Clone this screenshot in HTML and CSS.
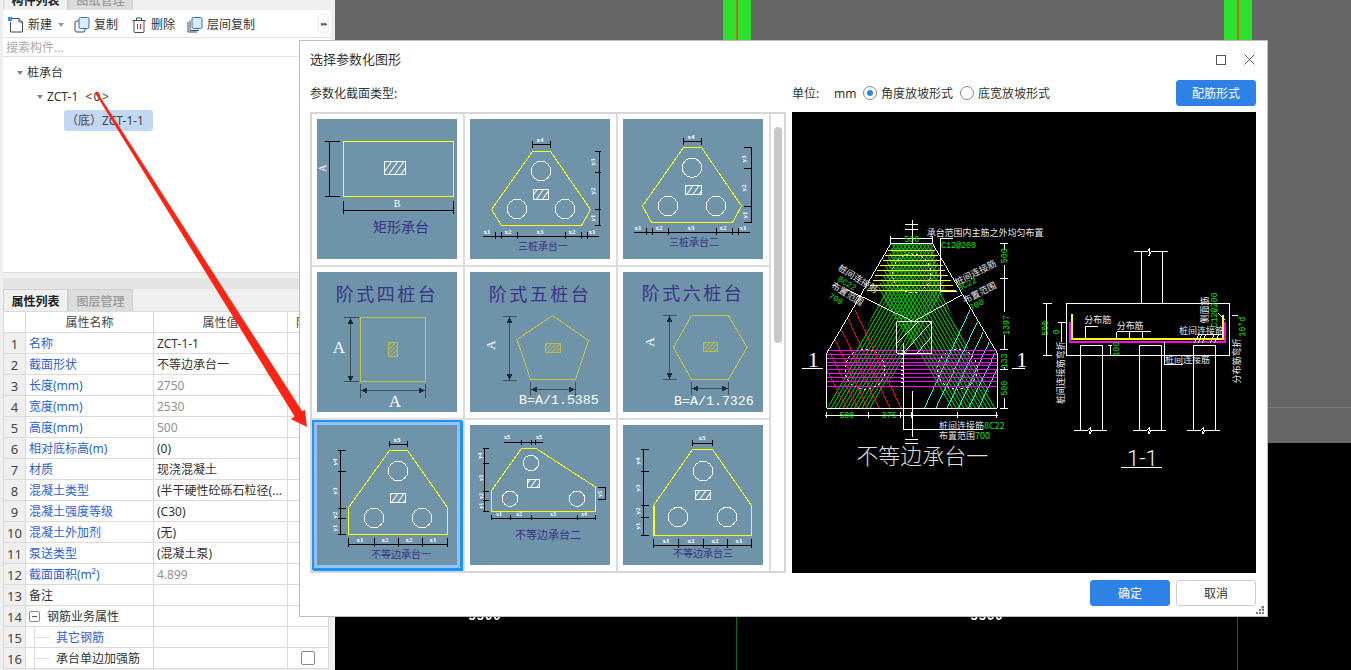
FILE: index.html
```html
<!DOCTYPE html>
<html lang="zh-CN">
<head>
<meta charset="utf-8">
<title>选择参数化图形</title>
<link rel="stylesheet" href="styles.css">
</head>
<body>
<svg class="defs" aria-hidden="true">
  <defs>
    <pattern id="hw" patternUnits="userSpaceOnUse" width="5" height="5" patternTransform="rotate(35)"><rect width="5" height="5" fill="#6f93a9"/><rect x="0" width="1" height="5" fill="#fff"/></pattern>
    <pattern id="hy" patternUnits="userSpaceOnUse" width="3" height="3" patternTransform="rotate(45)"><rect width="3" height="3" fill="#6f93a9"/><rect width="1" height="3" fill="#b9bb4c"/></pattern>
    <pattern id="gl" patternUnits="userSpaceOnUse" width="10" height="10" patternTransform="rotate(30)"><rect x="0" width="3" height="10" fill="#00d800"/></pattern>
    <pattern id="gr" patternUnits="userSpaceOnUse" width="10" height="10" patternTransform="rotate(-30)"><rect x="0" width="3" height="10" fill="#00d800"/></pattern>
  </defs>
</svg>

<div class="app">
  <aside class="panel">
    <div class="tabs tabs-top">
      <div class="tab tab-on">构件列表</div>
      <div class="tab">图纸管理</div>
    </div>
    <div class="toolbar">
      <svg class="ico" viewBox="0 0 16 16"><path class="i-line" d="M3 1.500h8l3.500 3.500v10H2.500V5"/><path class="i-line" d="M11 1.500V5h3.500"/><rect x="0" y="0" width="4" height="4" fill="#3b8fe8"/></svg>
      <span class="tool-label">新建</span>
      <span class="caret-small"></span>
      <svg class="ico ico-copy" viewBox="0 0 16 16"><rect class="i-line" x="1" y="4" width="10" height="11" rx="2"/><rect class="i-fill" x="5" y="0.500" width="10" height="11" rx="1.500"/></svg>
      <span class="tool-label">复制</span>
      <svg class="ico ico-del" viewBox="0 0 16 16"><path class="i-line" d="M3 4v10.500a1 1 0 0 0 1 1h8a1 1 0 0 0 1-1V4M1.500 3.500h13M5.500 3.500V1h5v2.500"/><path d="M6.500 7v5M9.500 7v5" stroke="#d8232a" fill="none"/></svg>
      <span class="tool-label">删除</span>
      <svg class="ico ico-layer" viewBox="0 0 16 16"><path class="i-line" d="M1 5v10h9M3 3.500v10h9"/><rect class="i-fill" x="5" y="0.500" width="10" height="11" rx="1.500"/></svg>
      <span class="tool-label">层间复制</span>
      <span class="more">&#9656;&#9656;</span>
    </div>
    <div class="search">搜索构件...</div>
    <div class="tree">
      <div class="node node-1"><span class="caret"></span>桩承台</div>
      <div class="node node-2"><span class="caret"></span>ZCT-1<span class="cnt">&lt;0&gt;</span></div>
      <div class="node node-3"><span class="pill">（底）ZCT-1-1</span></div>
    </div>
    <div class="band"></div>
    <div class="tabs">
      <div class="tab tab-on">属性列表</div>
      <div class="tab">图层管理</div>
    </div>
    <table class="props">
      <colgroup><col class="c-n"><col class="c-a"><col class="c-b"><col class="c-c"></colgroup>
      <thead><tr><th></th><th>属性名称</th><th>属性值</th><th>附加</th></tr></thead>
      <tbody>
        <tr><td class="num">1</td><td class="key">名称</td><td class="val">ZCT-1-1</td><td></td></tr>
        <tr><td class="num">2</td><td class="key">截面形状</td><td class="val">不等边承台一</td><td></td></tr>
        <tr><td class="num">3</td><td class="key">长度(mm)</td><td class="val mute">2750</td><td></td></tr>
        <tr><td class="num">4</td><td class="key">宽度(mm)</td><td class="val mute">2530</td><td></td></tr>
        <tr><td class="num">5</td><td class="key">高度(mm)</td><td class="val mute">500</td><td></td></tr>
        <tr><td class="num">6</td><td class="key">相对底标高(m)</td><td class="val">(0)</td><td></td></tr>
        <tr><td class="num">7</td><td class="key">材质</td><td class="val">现浇混凝土</td><td></td></tr>
        <tr><td class="num">8</td><td class="key">混凝土类型</td><td class="val">(半干硬性砼砾石粒径(...</td><td></td></tr>
        <tr><td class="num">9</td><td class="key">混凝土强度等级</td><td class="val">(C30)</td><td></td></tr>
        <tr><td class="num">10</td><td class="key">混凝土外加剂</td><td class="val">(无)</td><td></td></tr>
        <tr><td class="num">11</td><td class="key">泵送类型</td><td class="val">(混凝土泵)</td><td></td></tr>
        <tr><td class="num">12</td><td class="key">截面面积(m²)</td><td class="val mute">4.899</td><td></td></tr>
        <tr><td class="num">13</td><td class="key plain">备注</td><td></td><td></td></tr>
        <tr><td class="num">14</td><td class="key plain"><span class="minus"></span>钢筋业务属性</td><td></td><td></td></tr>
        <tr><td class="num">15</td><td class="key key-tree"><span class="branch"></span>其它钢筋</td><td></td><td></td></tr>
        <tr><td class="num">16</td><td class="key key-tree plain"><span class="branch"></span>承台单边加强筋</td><td></td><td class="chk"><span class="box"></span></td></tr>
      </tbody>
    </table>
  </aside>

  <main class="canvas">
    <div class="cv-grey"></div>
    <div class="cv-black"></div>
    <div class="col col-a"></div>
    <div class="col col-b"></div>
    <div class="hline"></div>
    <div class="gline gline-a"></div>
    <div class="gline gline-b"></div>
    <div class="axis axis-a">5500</div>
    <div class="axis axis-b">5500</div>
  </main>
</div>

<section class="dialog">
  <header class="dlg-title">
    <span>选择参数化图形</span>
    <span class="win">
      <span class="win-max"></span>
      <svg class="win-x" viewBox="0 0 11 11"><path d="M.5.500l10 10M10.500.500l-10 10"/></svg>
    </span>
  </header>
  <div class="dlg-opts">
    <div class="opt-left">参数化截面类型:</div>
    <div class="opt-right">
      <span class="unit">单位:</span>
      <span class="mm">mm</span>
      <span class="radio radio-on"></span><span class="radio-t">角度放坡形式</span>
      <span class="radio"></span><span class="radio-t">底宽放坡形式</span>
      <button class="btn btn-blue btn-push">配筋形式</button>
    </div>
  </div>
  <div class="dlg-body">
    <div class="gallery">
      <div class="grid">

        <div class="cell"><svg class="thumb" viewBox="0 0 140 140">
          <rect class="yl" x="26.500" y="22.500" width="110" height="55"/>
          <rect class="hatch" x="67.500" y="42.500" width="21" height="13"/>
          <path class="bk" d="M12.500 22.500v55M8 22.500h15M8 77.500h15M26.500 91.500h110M26.500 82v13M136.500 82v13"/>
          <text class="lb rot" x="9" y="49" transform="rotate(-90 9 49)">A</text>
          <text class="lb" x="80" y="88">B</text>
          <text class="cap cap-14" x="84" y="113">矩形承台</text>
        </svg></div>

        <div class="cell"><svg class="thumb" viewBox="0 0 140 140">
          <path class="yt" d="M62.500 32.500h18l40 58-9 16h-80l-10-16z"/>
          <circle class="wh" cx="71" cy="52" r="9.700"/><circle class="wh" cx="47" cy="90" r="9.700"/><circle class="wh" cx="95" cy="90" r="9.700"/>
          <rect class="hatch" x="63.500" y="70.500" width="15" height="10"/>
          <path class="bk" d="M62.500 25.500h18M62.500 22v7M80.500 22v7M129.500 32.500v74M125 32.500h6M125 53h6M125 90.500h6M125 106.500h6M13 117.500h116M25.500 113v7M31.500 113v7M47.500 113v7M95.500 113v7M111.500 113v7M117.500 113v7"/>
          <text class="sm" x="70" y="23">x4</text>
          <text class="sm" x="123" y="45" transform="rotate(-90 123 43)">y3</text><text class="sm" x="123" y="74" transform="rotate(-90 123 72)">y2</text><text class="sm" x="123" y="101" transform="rotate(-90 123 99)">y1</text>
          <text class="sm" x="17" y="115">x1</text><text class="sm" x="38" y="115">x2</text><text class="sm" x="70" y="115">x3</text><text class="sm" x="102" y="115">x2</text><text class="sm" x="122" y="115">x1</text>
          <text class="cap cap-10" x="73" y="131">三桩承台一</text>
        </svg></div>

        <div class="cell"><svg class="thumb" viewBox="0 0 140 140">
          <path class="yt" d="M60.500 28.500h18l40 58.500-9 16.500h-81l-9-16.500z"/>
          <circle class="wh" cx="69" cy="48.700" r="9.700"/><circle class="wh" cx="45" cy="87" r="9.700"/><circle class="wh" cx="93" cy="87" r="9.700"/>
          <rect class="hatch" x="62.500" y="66.500" width="16" height="9"/>
          <path class="bk" d="M60.500 22.500h18M60.500 19v7M78.500 19v7M128.500 28.500v75M121 28.500h8M121 49.500h8M121 87h8M121 103.500h8M11 113.500h116M23.500 109v7M29.500 109v7M45.500 109v7M93.500 109v7M109.500 109v7M115.500 109v7"/>
          <text class="sm" x="68" y="20">x4</text>
          <text class="sm" x="121" y="42" transform="rotate(-90 121 40)">y3</text><text class="sm" x="121" y="71" transform="rotate(-90 121 69)">y2</text><text class="sm" x="122" y="98" transform="rotate(-90 122 96)">y1</text>
          <text class="sm" x="15" y="111">x1</text><text class="sm" x="36" y="111">x2</text><text class="sm" x="68" y="111">x3</text><text class="sm" x="100" y="111">x2</text><text class="sm" x="120" y="111">x1</text>
          <text class="cap cap-10" x="71" y="126.500">三桩承台二</text>
        </svg></div>

        <div class="cell"><svg class="thumb" viewBox="0 0 140 140">
          <text class="cap cap-20" x="70" y="29">阶式四桩台</text>
          <rect class="ys" x="43.500" y="45.500" width="65" height="64"/>
          <rect class="hy" x="71.500" y="70.500" width="9" height="14"/>
          <path class="dk" d="M33.500 46v64M26.500 45.500h15M26.500 109.500h15M44 118.500h64M43.500 112v14M108.500 112v14"/>
          <path class="ar" d="M33.500 46l-3 6h6zM33.500 110l-3-6h6zM44 118.500l6-3v6zM108 118.500l-6-3v6z"/>
          <text class="lbb" x="22" y="81">A</text>
          <text class="lbb" x="78" y="135">A</text>
        </svg></div>

        <div class="cell"><svg class="thumb" viewBox="0 0 140 140">
          <text class="cap cap-20" x="70" y="29">阶式五桩台</text>
          <path class="ys" d="M82.500 43.500l36 25-13 39h-45l-13.500-40z"/>
          <rect class="hy" x="75.500" y="71.500" width="15" height="9"/>
          <path class="dk" d="M39.500 45v63M33 44.500h14M33 108.500h14M61 117.500h44M60.500 110v14M105.500 110v14"/>
          <path class="ar" d="M39.500 45l-3 6h6zM39.500 108l-3-6h6zM61 117.500l6-3v6zM105 117.500l-6-3v6z"/>
          <text class="lbr" x="25" y="73" transform="rotate(-90 25 73)">A</text>
          <text class="frm" x="49" y="132">B=A/1.5385</text>
        </svg></div>

        <div class="cell"><svg class="thumb" viewBox="0 0 140 140">
          <text class="cap cap-20" x="70" y="28">阶式六桩台</text>
          <path class="ys" d="M68.500 43.500h37l18.500 32-18.500 32h-37l-18-32z"/>
          <rect class="hy" x="80.500" y="70.500" width="14" height="9"/>
          <path class="dk" d="M46.500 44v63M39.500 43.500h14M39.500 107.500h14M69 116.500h36M68.500 110v13M105.500 110v13"/>
          <path class="ar" d="M46.500 44l-3 6h6zM46.500 107l-3-6h6zM69 116.500l6-3v6zM105 116.500l-6-3v6z"/>
          <text class="lbr" x="31" y="70" transform="rotate(-90 31 70)">A</text>
          <text class="frm" x="51" y="133">B=A/1.7326</text>
        </svg></div>

        <div class="cell"><svg class="thumb thumb-on" viewBox="0 0 140 140">
          <path class="yt" d="M72.500 25.500h18l40 57v27h-99v-27z"/>
          <circle class="wh" cx="81" cy="46" r="9.700"/><circle class="wh" cx="57" cy="93" r="9.700"/><circle class="wh" cx="105" cy="93" r="9.700"/>
          <rect class="hatch" x="73.500" y="68.500" width="15" height="9"/>
          <path class="bk" d="M72.500 19.500h18M72.500 16v6M90.500 16v6M23.500 25.500v84M21 25.500h8M21 46.500h8M21 83.500h8M21 93.500h8M21 109.500h8M31.500 119.500h99M31.500 113v9M57.500 113v9M81.500 113v9M105.500 113v9M130.500 113v9"/>
          <text class="sm" x="80" y="17">x5</text>
          <text class="sm" x="18" y="39" transform="rotate(-90 18 37)">y4</text><text class="sm" x="18" y="68" transform="rotate(-90 18 66)">y3</text><text class="sm" x="18" y="92" transform="rotate(-90 18 90)">y2</text><text class="sm" x="18" y="105" transform="rotate(-90 18 103)">y1</text>
          <text class="sm" x="43" y="117">x1</text><text class="sm" x="68" y="117">x2</text><text class="sm" x="92" y="117">x2</text><text class="sm" x="116" y="117">x1</text>
          <text class="cap cap-10" x="84" y="133">不等边承台一</text>
        </svg></div>

        <div class="cell"><svg class="thumb" viewBox="0 0 140 140">
          <path class="yt" d="M51.500 23.500h14.500l59.500 38.500v24.500h-104v-21z"/>
          <circle class="wh" cx="61" cy="38" r="7.700"/><circle class="wh" cx="40" cy="73.700" r="7.700"/><circle class="wh" cx="107" cy="73.700" r="7.700"/>
          <rect class="hatch" x="57.500" y="54.500" width="11.500" height="8"/>
          <path class="bk" d="M34 17.500h39M51.500 15v5M61.500 15v5M65.500 15v5M14.500 23.500v63M13 23.500h6M13 38.500h6M13 66.500h6M13 75.500h6M13 86.500h6M135.500 62v12M128 62h8M128 74.500h8M21.500 93.500h104M21.500 90v5M40.500 90v5M61.500 90v5M107.500 90v5M125.500 90v5"/>
          <text class="sm sm-6" x="37" y="14">x5</text><text class="sm sm-6" x="69" y="14">x5</text>
          <text class="sm sm-6" x="11" y="32" transform="rotate(-90 11 30.700)">y4</text><text class="sm sm-6" x="11" y="55" transform="rotate(-90 11 53)">y3</text><text class="sm sm-6" x="11" y="73" transform="rotate(-90 11 71)">y2</text><text class="sm sm-6" x="11" y="82.500" transform="rotate(-90 11 80.700)">y1</text>
          <text class="sm sm-6" x="130" y="71" transform="rotate(-90 130 69)">y5</text>
          <text class="sm sm-6" x="29" y="91">x1</text><text class="sm sm-6" x="49" y="91">x2</text><text class="sm sm-6" x="83" y="91">x3</text><text class="sm sm-6" x="114" y="91">x4</text>
          <text class="cap cap-11" x="78" y="114">不等边承台二</text>
        </svg></div>

        <div class="cell"><svg class="thumb" viewBox="0 0 140 140">
          <path class="yt" d="M69.500 24.500h20l39 56v30h-98v-30z"/>
          <path class="y2" d="M30.500 81v29"/>
          <circle class="wh" cx="80" cy="46" r="9.700"/><circle class="wh" cx="55" cy="92" r="9.700"/><circle class="wh" cx="104" cy="92" r="9.700"/>
          <rect class="hatch" x="72.500" y="65.500" width="15" height="9"/>
          <path class="bk" d="M69.500 18.500h20M69.500 15v6M89.500 15v6M20.500 24.500v86M18 24.500h8M18 46.500h8M18 80.500h8M18 92.500h8M18 110.500h8M30.500 120.500h98M30.500 114v9M55.500 114v9M80.500 114v9M104.500 114v9M128.500 114v9"/>
          <text class="sm" x="79" y="15">x5</text>
          <text class="sm" x="15" y="38" transform="rotate(-90 15 36)">y4</text><text class="sm" x="15" y="65" transform="rotate(-90 15 63)">y3</text><text class="sm" x="15" y="88" transform="rotate(-90 15 86)">y2</text><text class="sm" x="15" y="103" transform="rotate(-90 15 101)">y1</text>
          <text class="sm" x="43" y="118">x1</text><text class="sm" x="68" y="118">x2</text><text class="sm" x="92" y="118">x2</text><text class="sm" x="116" y="118">x1</text>
          <text class="cap cap-10" x="80" y="132">不等边承台三</text>
        </svg></div>
      </div>
      <div class="scroll"><div class="scroll-thumb"></div></div>
    </div>

    <svg class="preview" viewBox="0 0 464 461">
      <g transform="translate(3 98) scale(.33333)">
        <path fill="url(#gl)" d="M97 595h135l220-355-42-140H295l-25 140z"/>
        <path fill="url(#gr)" d="M605 595H470L250 240l42-140h118l25 140z"/>
        <path class="p-y" d="M278 122h142M270 137h160M263 152h173M255 167h188M247 182h203M240 197h220M235 212h232M225 228h250M215 243h268"/>
        <path class="p-r" d="M180 300l138 295M158 325l127 270M140 360l112 235M120 390l98 205M105 430l83 165M95 480l60 115"/>
        <path class="p-c" d="M525 300L388 595M548 335L422 595M565 365L456 595M583 395L490 595M600 430L520 595M607 475L550 595"/>
        <path class="p-m" d="M97 421h508M97 433h508M97 445h508M97 457h508M97 468h508M97 479h508M97 490h508M97 503h508M97 515h508M97 530h508"/>
        <circle class="p-d" cx="210" cy="478" r="60"/><circle class="p-d" cx="487" cy="478" r="60"/><circle class="p-d" cx="350" cy="190" r="58"/>
        <path class="p-w" d="M288 100h124l195 330v165H95V430zM288 85h124M288 78v22M412 78v22M330 45h40M330 58h40M352 30v70M155 238l200 97 145-80M437 245V85h38M437 245h50"/>
        <path class="p-w" d="M305 335h105v95H305zM305 400l65-65M325 430l85-95M365 430l45-50M326 400v260h239M352 543v137M330 690h40M330 702h40M22 475h63M650 475h40"/>
        <path class="p-dt" d="M322 420v120"/>
        <path class="p-w" d="M628 100v20M628 165v40M628 205v100M628 375v45M628 470v10M628 565v30M615 100h25M615 205h25M615 420h25M615 480h25M615 595h25M90 617h520M95 607v17M222 607v17M318 607v17M350 607v17M487 607v17M605 607v17"/>
        <text class="p-big" x="55" y="470" text-anchor="middle">1</text>
        <text class="p-big" x="680" y="470" text-anchor="middle">1</text>
        <text class="p-t" x="395" y="78">承台范围内主筋之外均匀布置</text>
        <text class="p-g" x="438" y="113">C12@200</text>
        <text class="p-g p-mid" x="350" y="96">530</text>
        <text class="p-g p-mid" x="155" y="624">500</text>
        <text class="p-g p-mid" x="283" y="624">375</text>
        <text class="p-g p-mid" x="628" y="146" transform="rotate(-90 628 137)">500</text>
        <text class="p-g p-mid" x="634" y="354" transform="rotate(-90 634 345)">1397</text>
        <text class="p-g p-mid" x="628" y="462" transform="rotate(-90 628 453)">133</text>
        <text class="p-g p-mid" x="628" y="544" transform="rotate(-90 628 535)">500</text>
        <text class="p-t" x="132" y="180" transform="rotate(32 132 170)">桩间连接筋</text>
        <text class="p-g" x="130" y="212" transform="rotate(32 130 205)">8C22</text>
        <text class="p-t" x="110" y="232" transform="rotate(32 110 225)">布置范围</text>
        <text class="p-g" x="103" y="262" transform="rotate(32 103 255)">700</text>
        <text class="p-t" x="482" y="228" transform="rotate(-27 482 220)">桩间连接筋</text>
        <text class="p-g" x="490" y="244" transform="rotate(-27 490 237)">8C22</text>
        <text class="p-t" x="507" y="282" transform="rotate(-27 507 275)">布置范围</text>
        <text class="p-g" x="525" y="302" transform="rotate(-27 525 295)">700</text>
        <text class="p-t" x="432" y="657">桩间连接筋<tspan class="p-gs">8C22</tspan></text>
        <text class="p-t" x="432" y="687">布置范围<tspan class="p-gs">700</tspan></text>
        <text class="p-title" x="382" y="762">不等边承台一</text>
      </g>
      <g transform="translate(233 118) scale(.33333)">
        <path class="p-w" d="M350 65v155M412 65v155M328 65h40l6-12-2 24 6-12h50M124.500 220.500h490v157h-490zM66 220v157M55 220h25M55 377h25M100 277h22M110 277v60M250 346h10M258 346v32M245 378h16"/>
        <path class="p-w" d="M166 601V346h66v255M148 601h42l6-10-2 22 6-12h45M343 601V346h67v255M325 601h42l6-10-2 22 6-12h45M505 601V346h66v255M487 601h42l6-10-2 22 6-12h45"/>
        <path class="p-mb" d="M135 275v61h465v-61"/>
        <path class="p-yb" d="M141 252v74h453v-71"/>
        <path class="p-w" d="M181 330v-40h37M275 305h103M275 305v22M315 305v22M352 305v22M418 336v68h57M508 340l12-25h75M518 340l12-25M530 340l12-25M555 340l12-25M568 340l12-25M620 257h20M580 250l20 20"/>
        <text class="p-t" x="178" y="280">分布筋</text>
        <text class="p-t" x="275" y="298">分布筋</text>
        <text class="p-t" x="462" y="312">桩间连接筋</text>
        <text class="p-t" x="420" y="399">桩间连接筋</text>
        <text class="p-t p-mid" x="540" y="250" transform="rotate(-90 540 240)">侧面筋</text>
        <text class="p-t p-mid" x="635" y="403" transform="rotate(-90 635 393)">分布筋弯折</text>
        <text class="p-t p-mid" x="108" y="438" transform="rotate(-90 108 428)">桩间连接筋弯折</text>
        <text class="p-g p-mid" x="568" y="248" transform="rotate(-90 568 240)">C12@200</text>
        <text class="p-g p-mid" x="652" y="298" transform="rotate(-90 652 290)">10*d</text>
        <text class="p-g p-mid" x="60" y="303" transform="rotate(-90 60 295)">500</text>
        <text class="p-g p-mid" x="93" y="313" transform="rotate(-90 93 305)">0</text>
        <text class="p-g p-mid" x="273" y="366" transform="rotate(-90 273 358)">100</text>
        <text class="p-sec" x="352" y="708">1-1</text>
        <path class="p-w" d="M288 712h122"/>
      </g>
    </svg>
  </div>
  <footer class="dlg-foot">
    <button class="btn btn-blue">确定</button>
    <button class="btn">取消</button>
  </footer>
  <svg class="grip" viewBox="0 0 8 8"><path d="M5.500 0h2.500v2.500H5.500zM3 3h2v2H3zM6 3h2v2H6zM0 6h2v2H0zM3 6h2v2H3zM6 6h2v2H6z"/></svg>
</section>

<svg class="arrow" viewBox="0 0 1351 670"><path d="M95 93L97 92 302 411 305 410 307 427 290.700 419 294.600 416.600z"/></svg>
</body>
</html>
```

FILE: styles.css
```css
* { box-sizing: border-box; }
html, body { margin: 0; height: 670px; overflow: hidden; }
body { font: 12px/1.2 "Noto Sans", "Noto Sans CJK SC", sans-serif; color: #333; background: #000; position: relative; }
.defs { position: absolute; width: 0; height: 0; }
.app { display: flex; height: 670px; }

/* left panel */
.panel { width: 335px; flex: none; height: 670px; background: #efefef; padding: 0 4px 0 3px; display: flex; flex-direction: column; overflow: hidden; }
.tabs { display: flex; height: 22px; flex: none; align-items: flex-end; }
.tabs-top { height: 10px; }
.tab { width: 65px; height: 22px; flex: none; text-align: center; font-size: 12px; line-height: 23px; color: #999; background: #dcdcdc; border: 1px solid #d0d0d0; border-bottom: 0; font-weight: 500; }
.tab-on { background: #f0f0f0; color: #222; font-weight: 700; }
.toolbar { height: 28px; background: #fff; display: flex; align-items: center; padding: 2px 0 0 5px; flex: none; border-bottom: 1px solid #e2e2e2; }
.ico { width: 16px; height: 16px; flex: none; }
.ico-copy { margin-left: 10px; }
.ico-del { margin-left: 13px; }
.ico-layer { margin-left: 12px; }
.i-line { fill: none; stroke: #3c4a5c; stroke-width: 1; }
.i-fill { fill: #dcebfb; stroke: #2f72c4; stroke-width: 1; }
.tool-label { margin-left: 4px; padding-top: 2px; color: #333; }
.caret-small { margin-left: 6px; width: 0; height: 0; border: 3px solid transparent; border-top: 4px solid #999; border-bottom: 0; }
.more { margin-left: auto; margin-right: 2px; margin-top: -2px; width: 11px; height: 19px; border: 1px solid #eee; border-radius: 3px; font-size: 7px; line-height: 17px; letter-spacing: -1px; text-align: center; color: #555; }
.search { height: 19px; flex: none; background: #fff; color: #aaa; line-height: 20px; padding-left: 3px; border-bottom: 1px solid #e2e2e2; }
.tree { height: 216px; flex: none; background: #fff; padding-top: 3px; border-bottom: 1px solid #ddd; }
.node { height: 24px; line-height: 24px; display: flex; align-items: center; color: #333; white-space: nowrap; }
.node-1 { padding: 2px 0 0 14px; }
.node-2 { padding: 2px 0 0 34px; }
.node-3 { padding-left: 61px; }
.cnt { margin-left: 7px; letter-spacing: 1.500px; }
.caret { width: 0; height: 0; border: 3.500px solid transparent; border-top: 4px solid #808080; border-bottom: 0; margin-right: 4px; }
.pill { display: block; width: 89px; height: 21px; line-height: 22px; background: #c1d8f2; border-radius: 3px; padding-left: 2px; color: #444; }
.band { height: 11px; margin-top: 5px; background: #e4e4e4; flex: none; }
.props { width: 325px; table-layout: fixed; border-collapse: collapse; background: #fff; flex: none; }
.c-n { width: 22px; }
.c-a { width: 128px; }
.c-b { width: 134px; }
.c-c { width: 41px; }
.props th, .props td { height: 21px; padding: 2px 0 0; border: 1px solid #dadada; overflow: hidden; white-space: nowrap; font-weight: 400; font-size: 12px; line-height: 18px; }
.props th { color: #444; }
.props .num { background: #efefef; text-align: center; font-size: 13px; color: #444; }
.key { color: #2a62d8; padding-left: 3px !important; }
.key.plain { color: #333; }
.key-tree { padding-left: 0 !important; }
.val { padding-left: 3px !important; color: #333; }
.mute { color: #909090; }
.minus { display: inline-block; position: relative; width: 11px; height: 11px; border: 1px solid #888; border-radius: 2px; margin: 0 7px 0 0; vertical-align: -1px; }
.minus::after { content: ""; position: absolute; left: 2px; right: 2px; top: 4px; height: 1px; background: #555; }
.branch { display: inline-block; width: 15px; height: 20px; margin: -2px 7px -2px 8px; border-left: 1px solid #ddd; background: linear-gradient(#ddd, #ddd) no-repeat 0 10px / 100% 1px; vertical-align: top; }
.props .chk { padding: 0; }
.box { display: block; width: 14px; height: 14px; margin-left: 13px; border: 1px solid #888; border-radius: 2px; background: #fff; }

/* drawing canvas */
.canvas { flex: 1; position: relative; display: flex; flex-direction: column; overflow: hidden; }
.cv-grey { height: 443px; background: #666; }
.cv-black { flex: 1; background: #000; }
.col { position: absolute; top: 0; height: 41px; width: 28px; background: #2de02d; }
.col::after { content: ""; position: absolute; left: 13px; width: 2px; top: 0; bottom: 0; background: #b4701c; }
.col-a { left: 388px; }
.col-b { left: 889px; }
.hline { position: absolute; left: 0; right: 0; top: 407px; height: 1px; background: #7a7a7a; }
.gline { position: absolute; top: 443px; bottom: 0; width: 1px; background: #0c6c0c; }
.gline-a { left: 401px; }
.gline-b { left: 902px; }
.axis { position: absolute; top: 609px; width: 40px; text-align: center; color: #fff; font: 700 13px/14px "Liberation Sans", sans-serif; letter-spacing: 1px; }
.axis-a { left: 130px; }
.axis-b { left: 632px; }

/* dialog */
.dialog { position: absolute; left: 299px; top: 40px; width: 969px; height: 577px; background: #fff; border: 1px solid #bdbdbd; padding: 0 11px 0 10px; display: flex; flex-direction: column; }
.dlg-title { height: 39px; flex: none; display: flex; align-items: center; justify-content: space-between; font-size: 13px; color: #333; padding-bottom: 2px; }
.win { display: flex; align-items: center; gap: 18px; margin-right: 1px; }
.win-max { width: 10px; height: 10px; border: 1px solid #555; }
.win-x { width: 11px; height: 11px; }
.win-x path { stroke: #666; fill: none; }
.dlg-opts { height: 26px; flex: none; display: flex; align-items: center; color: #333; }
.opt-left { width: 482px; padding-top: 2px; }
.opt-right { flex: 1; display: flex; align-items: center; }
.unit { width: 42px; padding-top: 2px; }
.mm { width: 29px; font-size: 12px; padding-top: 2px; }
.radio { width: 14px; height: 14px; flex: none; border: 1px solid #888; border-radius: 50%; position: relative; background: #fff; }
.radio-on::after { content: ""; position: absolute; left: 3px; top: 3px; width: 6px; height: 6px; border-radius: 50%; background: #2e82e5; }
.radio-t { margin: 0 7px 0 4px; padding-top: 2px; }
.btn { width: 80px; height: 26px; flex: none; border: 1px solid #ccc; border-radius: 3px; background: #fff; color: #333; font: inherit; padding: 2px 0 0; }
.btn-blue { background: #2e82e5; border-color: #2e82e5; color: #fff; }
.btn-push { margin-left: auto; }
.dlg-body { display: flex; gap: 6px; height: 461px; margin-top: 6px; flex: none; }
.gallery { width: 476px; flex: none; height: 461px; border: 2px solid #d6d6d6; display: flex; overflow: hidden; }
.grid { display: grid; grid-template-columns: repeat(3, 153px); grid-auto-rows: 153px; width: 459px; flex: none; }
.cell { padding: 5px 6px 0 5px; border-right: 2px solid #dcdcdc; border-bottom: 2px solid #dcdcdc; }
.thumb { display: block; width: 140px; height: 140px; background: #6f93a9; shape-rendering: crispEdges; font-family: "Noto Sans CJK SC", sans-serif; }
.thumb-on { box-shadow: 0 0 0 3px #93c0f5, 0 0 0 5px #1a94ff, 1px 1px 0 5px #1a94ff; }
.scroll { flex: 1; padding: 13px 0 0 3px; }
.scroll-thumb { width: 8px; height: 216px; border-radius: 4px; background: #c8c8c8; }
.yl { fill: none; stroke: #ff0; stroke-width: 1; }
.yt { fill: none; stroke: #ff0; stroke-width: 1; }
.y2 { fill: none; stroke: #ff0; stroke-width: 2; }
.ys { fill: none; stroke: #c2c444; stroke-width: 1; }
.hatch { fill: url(#hw); stroke: #fff; stroke-width: 1; }
.hy { fill: url(#hy); stroke: #b9bb4c; stroke-width: 1; }
.wh { fill: none; stroke: #fff; stroke-width: 1; }
.bk { fill: none; stroke: #000; stroke-width: 1; }
.dk { fill: none; stroke: #3f4f5c; stroke-width: 1; }
.ar { fill: #1f2a33; stroke: none; }
.sm { fill: #fff; font: 700 7px "Liberation Serif", serif; text-anchor: middle; }
.sm-6 { font-size: 6px; }
.lb { fill: #fff; font: 10px "Liberation Serif", serif; text-anchor: middle; }
.lbb { fill: #fff; font: 17px "Liberation Serif", serif; text-anchor: middle; }
.lbr { fill: #fff; font: 13px "Liberation Serif", serif; text-anchor: middle; }
.frm { fill: #fff; font: 13.300px "Liberation Mono", monospace; }
.cap { fill: #3a3486; text-anchor: middle; }
.cap-10 { font-size: 10px; }
.cap-11 { font-size: 11px; }
.cap-14 { font-size: 14px; }
.cap-20 { font-size: 18px; letter-spacing: 2.500px; }

/* CAD preview */
.preview { width: 464px; height: 461px; flex: none; background: #000; shape-rendering: crispEdges; font-family: "Noto Sans CJK SC", sans-serif; }
.p-w { fill: none; stroke: #fff; stroke-width: 3; }
.p-y { fill: none; stroke: #ff0; stroke-width: 3; }
.p-r { fill: none; stroke: #f00; stroke-width: 3; }
.p-c { fill: none; stroke: #0ff; stroke-width: 3; }
.p-m { fill: none; stroke: #f0f; stroke-width: 3; }
.p-d { fill: none; stroke: #fff; stroke-width: 3; stroke-dasharray: 6 9; }
.p-dt { fill: none; stroke: #fff; stroke-width: 9; stroke-dasharray: 3 9; }
.p-mb { fill: none; stroke: #f0f; stroke-width: 7; }
.p-yb { fill: none; stroke: #ff0; stroke-width: 6; }
.p-t { fill: #e8e8e8; font-size: 27px; }
.p-g { fill: #16e016; font: 25px "Liberation Mono", monospace; }
.p-gs { fill: #16e016; }
.p-mid { text-anchor: middle; }
.p-big { fill: #fff; font: 66px "Liberation Serif", serif; }
.p-title { fill: #dcdcdc; font-size: 66px; font-weight: 300; text-anchor: middle; }
.p-sec { fill: #e8f0ff; font: 300 66px Roboto, sans-serif; text-anchor: middle; }

.dlg-foot { display: flex; justify-content: flex-end; gap: 6px; margin-top: 7px; flex: none; }
.grip { position: absolute; right: 3px; bottom: 2px; width: 8px; height: 8px; fill: #777; }

.arrow { position: absolute; left: 0; top: 0; width: 1351px; height: 670px; pointer-events: none; }
.arrow path { fill: #ff2413; }
```
